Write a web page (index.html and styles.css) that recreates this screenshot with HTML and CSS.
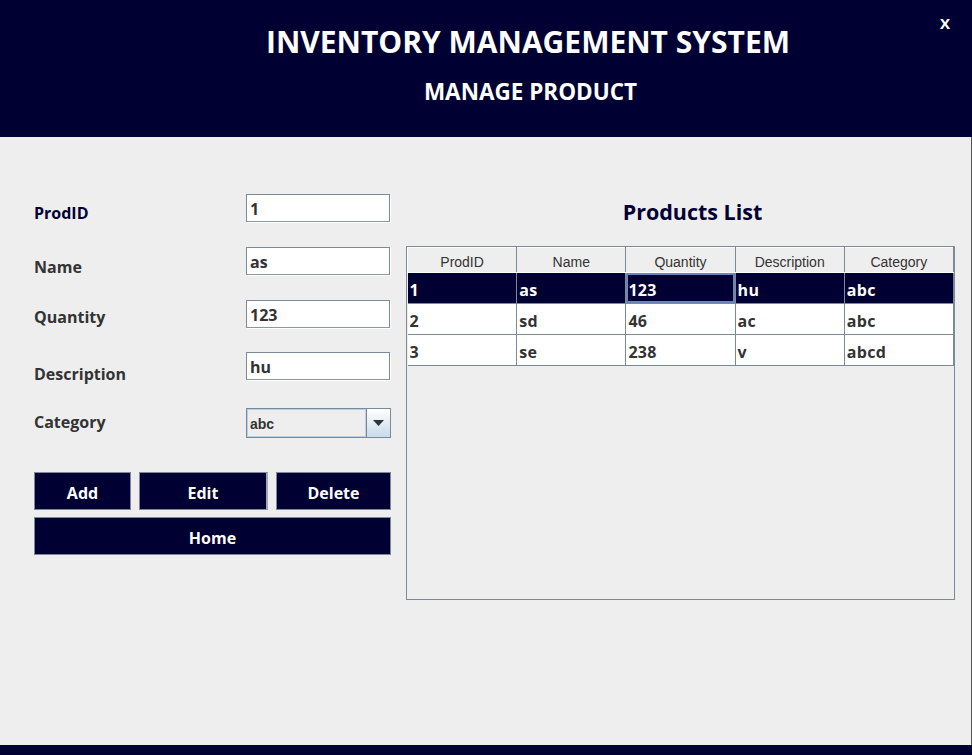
FILE: index.html
```html
<!DOCTYPE html>
<html>
<head>
<meta charset="utf-8">
<link rel="stylesheet" href="styles.css">
</head>
<body>
<div class="app">
  <header class="header">
    <h1 class="title">INVENTORY MANAGEMENT SYSTEM</h1>
    <h2 class="subtitle">MANAGE PRODUCT</h2>
    <span class="close">X</span>
  </header>
  <main class="main">
    <section class="form">
      <div class="row r1"><label class="lbl navy">ProdID</label><div class="field">1</div></div>
      <div class="row r2"><label class="lbl">Name</label><div class="field">as</div></div>
      <div class="row r3"><label class="lbl">Quantity</label><div class="field">123</div></div>
      <div class="row r4"><label class="lbl">Description</label><div class="field">hu</div></div>
      <div class="row r5"><label class="lbl">Category</label>
        <div class="combo"><div class="combo-val">abc</div><div class="combo-btn"><svg width="11" height="6" viewBox="0 0 11 6"><path d="M0 0H11L5.5 6Z" fill="#333"/></svg></div></div>
      </div>
      <div class="btns">
        <button class="btn b-add">Add</button>
        <button class="btn b-edit">Edit</button>
        <button class="btn b-del">Delete</button>
      </div>
      <button class="btn b-home">Home</button>
    </section>
    <section class="list">
      <h3 class="list-title">Products List</h3>
      <div class="table-frame">
        <table class="tbl">
          <thead>
            <tr><th>ProdID</th><th>Name</th><th>Quantity</th><th>Description</th><th>Category</th></tr>
          </thead>
          <tbody>
            <tr class="sel"><td>1</td><td>as</td><td class="focus">123</td><td>hu</td><td>abc</td></tr>
            <tr><td>2</td><td>sd</td><td>46</td><td>ac</td><td>abc</td></tr>
            <tr><td>3</td><td>se</td><td>238</td><td>v</td><td>abcd</td></tr>
          </tbody>
        </table>
      </div>
    </section>
  </main>
  <footer class="footer"></footer>
</div>
</body>
</html>
```
FILE: styles.css
```css
* { box-sizing: border-box; }
html, body { margin: 0; padding: 0; }
body { width: 972px; height: 755px; overflow: hidden; background: #eeeeee; font-family: "Open Sans", "Noto Sans", sans-serif; }
.app { display: flex; flex-direction: column; height: 755px; }
.header { position: relative; height: 137px; background: #000033; color: #fff; text-align: center; padding-top: 21px; padding-left: 84px; }
.title { margin: 0; font-size: 30px; font-weight: 700; letter-spacing: 0; line-height: 42px; }
.subtitle { margin: 14px 0 0 5px; font-size: 22.5px; font-weight: 700; letter-spacing: 0; line-height: 30px; }
.close { position: absolute; right: 22px; top: 13px; font-size: 15px; font-weight: 700; }
.main { flex: 1; display: flex; padding: 57px 17px 0 34px; border-right: 1px solid #555; }
.footer { height: 10px; background: #000033; }
.form { width: 357px; display: flex; flex-direction: column; }
.row { display: flex; align-items: flex-start; height: 28px; }
.r2 { margin-top: 25px; }
.r3 { margin-top: 25px; }
.r4 { margin-top: 24px; }
.r5 { margin-top: 28px; height: 30px; }
.lbl { width: 212px; font-size: 16px; font-weight: 700; color: #333333; line-height: 20px; }
.navy { color: #000033; }
.r1 .lbl { padding-top: 9px; }
.r2 .lbl { padding-top: 10px; }
.r3 .lbl { padding-top: 7px; }
.r4 .lbl { padding-top: 12px; }
.r5 .lbl { padding-top: 4px; }
.field { width: 144px; height: 28px; background: #fff; border: 1px solid #7a8a99; border-bottom-color: #8a99a6; font-size: 16px; font-weight: 700; color: #333; padding: 4px 0 0 3px; line-height: 20px; box-shadow: 1px 1px 0 #fff; }
.combo { width: 145px; height: 30px; border: 1px solid #7a8a99; display: flex; background: #eee; }
.combo-val { flex: 1; border: 1px solid #b8cfe5; font-family: "Liberation Sans", Arial, sans-serif; font-weight: 700; font-size: 14px; color: #333; padding: 6px 0 0 2px; }
.combo-btn { width: 24px; border-left: 1px solid #7a8a99; background: linear-gradient(#ffffff, #c8daea); display: flex; align-items: center; justify-content: center; }
.btns { display: flex; margin-top: 34px; gap: 8px; }
.btn { height: 38px; background: #000033; color: #fff; border: 1px solid #7a8a99; font-family: "Open Sans", "Noto Sans", sans-serif; font-weight: 700; font-size: 16px; padding: 3px 0 0; }
.b-add { width: 97px; }
.b-edit { width: 129px; border-right: 2px solid #a0a8b8; }
.b-del { width: 115px; }
.b-home { width: 357px; margin-top: 7px; }
.list { width: 549px; margin-left: 15px; display: flex; flex-direction: column; }
.list-title { margin: 3px 0 0; padding-left: 24px; text-align: center; font-size: 21.5px; font-weight: 700; color: #000033; line-height: 30px; letter-spacing: 0; }
.table-frame { margin-top: 19px; height: 354px; border: 1px solid #7a8a99; background: #eee; }
.tbl { width: 547px; border-collapse: collapse; table-layout: fixed; }
.tbl th { height: 25px; font-family: "Liberation Sans", Arial, sans-serif; font-weight: 400; font-size: 14px; color: #333; background: #eeeeee; border-right: 1px solid #7a8a99; border-left: 1px solid #fff; border-top: 1px solid #fff; border-bottom: 1px solid #fff; padding: 3px 0 0; }
.tbl td { height: 31px; background: #fff; border: 1px solid #7a8a99; border-top: 0; font-size: 16px; font-weight: 700; color: #333; padding: 3px 0 0 2px; line-height: 20px; letter-spacing: 0.3px; }
.tbl td:first-child { border-left: 0; }
.tbl tr.sel td { background: #000033; color: #fff; }
.tbl td.focus { box-shadow: inset 0 0 0 1px #6b85b6, inset 0 0 0 2px #6b85b6; }
```
